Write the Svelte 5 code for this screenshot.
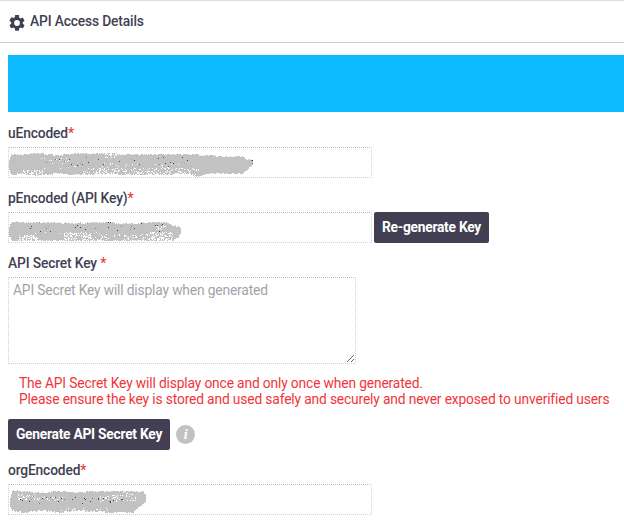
<script>
    // Masks over the stored values: [x, top, bottom] profile points,
    // plus the rows [from, to, y1, y2, density] where the brush is thin
    const masks = {
        user: {
            profile: [[0, 11, 22], [2, 6, 27], [12, 6, 26], [30, 5, 28], [48, 7, 26], [70, 5, 27], [98, 5, 26], [120, 6, 27], [148, 6, 27], [180, 6, 26], [187, 6, 29], [192, 7, 29], [196, 7, 26], [215, 8, 26], [233, 8, 26], [239, 11, 21], [244, 12, 17]],
            holes: [[14, 34, 22, 27, 0.4], [72, 190, 20, 27, 0.2], [96, 108, 5, 10, 0.3], [16, 60, 8, 14, 0.06], [30, 190, 15, 21, 0.03]],
            specks: [28, 192, 9, 19, 46],
        },
        key: {
            profile: [[0, 13, 24], [3, 8, 28], [15, 9, 28], [42, 9, 28], [60, 10, 28], [90, 9, 28], [120, 10, 28], [142, 9, 28], [156, 9, 28], [164, 12, 28], [169, 13, 25], [172, 16, 19]],
            holes: [[10, 29, 22, 29, 0.48], [55, 83, 20, 28, 0.35], [84, 140, 21, 28, 0.13], [140, 164, 19, 28, 0.38], [24, 90, 19, 21, 0.1], [147, 157, 11, 18, 0.25]],
            specks: [18, 158, 9, 19, 46],
        },
        org: {
            profile: [[1, 12, 22], [3, 5, 26], [15, 6, 28], [32, 7, 26], [50, 6, 28], [66, 7, 26], [86, 6, 27], [104, 6, 28], [124, 6, 28], [130, 6, 22], [134, 6, 19], [137, 11, 16]],
            holes: [[9, 26, 9, 15, 0.25], [27, 60, 12, 16, 0.18], [90, 127, 10, 17, 0.22], [35, 105, 23, 28, 0.08], [110, 126, 6, 10, 0.2]],
            specks: [9, 128, 11, 19, 50],
        },
    };

    const speckColors = ["#4a4770", "#3b8fe8", "#e0975f", "#55333a", "#8ec8f5", "#29375f", "#efb98c"];

    function brush({ profile, holes, specks }, seed) {
        let s = seed;
        const rand = () => {
            s = (s * 16807) % 2147483647;
            return s / 2147483647;
        };
        let path = "";
        for (let i = 0; i < profile.length - 1; i++) {
            const [x1, t1, b1] = profile[i];
            const [x2, t2, b2] = profile[i + 1];
            for (let x = x1; x < x2; x++) {
                const k = (x - x1) / (x2 - x1);
                const top = Math.round(t1 + (t2 - t1) * k);
                const bottom = Math.round(b1 + (b2 - b1) * k);
                for (let y = top; y < bottom; y++) {
                    const hole = holes.find((h) => x >= h[0] && x < h[1] && y >= h[2] && y < h[3]);
                    let chance = hole ? hole[4] : 0;
                    if (y === top || y === bottom - 1) chance = Math.max(chance, 0.42);
                    if (rand() >= chance) path += `M${x} ${y}h1v1h-1z`;
                }
            }
        }
        const dots = [];
        for (let i = 0; i < specks[4]; i++) {
            dots.push({
                x: Math.floor(specks[0] + rand() * (specks[1] - specks[0])),
                y: Math.floor(specks[2] + rand() * (specks[3] - specks[2])),
                fill: speckColors[i % speckColors.length],
            });
        }
        return { path, dots };
    }

    const user = brush(masks.user, 271828);
    const key = brush(masks.key, 913377);
    const org = brush(masks.org, 557021);
    user.dots.push({ x: 243, y: 12, fill: "#29375f" }, { x: 242, y: 12, fill: "#3b8fe8" }, { x: 243, y: 15, fill: "#3b8fe8" });
</script>

{#snippet field(mask)}
    <div class="input">
        <svg width="361" height="29" viewBox="0 0 361 29" shape-rendering="crispEdges">
            <path d={mask.path} fill="#c2c2c2" />
            {#each mask.dots as dot}
                <rect x={dot.x} y={dot.y} width="1" height="1" fill={dot.fill} />
            {/each}
        </svg>
    </div>
{/snippet}

<div class="panel">
    <header>
        <svg class="gear" viewBox="2 2 20 20">
            <path
                fill="#423f52"
                d="M19.14 12.94c.04-.3.06-.61.06-.94 0-.32-.02-.64-.07-.94l2.03-1.58a.49.49 0 0 0 .12-.61l-1.92-3.32a.49.49 0 0 0-.59-.22l-2.39.96a7 7 0 0 0-1.62-.94l-.36-2.54A.48.48 0 0 0 13.92 2h-3.84a.48.48 0 0 0-.48.41l-.36 2.54c-.59.24-1.13.57-1.62.94l-2.39-.96a.49.49 0 0 0-.59.22L2.72 8.87a.48.48 0 0 0 .12.61l2.03 1.58c-.05.3-.07.62-.07.94s.02.64.07.94l-2.03 1.58a.49.49 0 0 0-.12.61l1.92 3.32c.12.22.37.29.59.22l2.39-.96c.5.38 1.03.7 1.62.94l.36 2.54c.05.24.24.41.48.41h3.84c.24 0 .44-.17.47-.41l.36-2.54c.59-.24 1.13-.56 1.62-.94l2.39.96c.22.08.47 0 .59-.22l1.92-3.32a.48.48 0 0 0-.12-.61zM12 15.6A3.6 3.6 0 1 1 12 8.4a3.6 3.6 0 0 1 0 7.2z"
            />
        </svg>
        <h1>API Access Details</h1>
    </header>

    <div class="banner"></div>

    <div class="group">
        <span class="label">uEncoded<b>*</b></span>
        {@render field(user)}
    </div>

    <div class="group">
        <span class="label">pEncoded (API Key)<b>*</b></span>
        <div class="row">
            {@render field(key)}
            <button type="button" class="regenerate">Re-generate Key</button>
        </div>
    </div>

    <div class="group">
        <label class="label" for="secret">API Secret Key <b>*</b></label>
        <textarea id="secret" placeholder="API Secret Key will display when generated"></textarea>
    </div>

    <p class="warning">
        The API Secret Key will display once and only once when generated.<br />
        Please ensure the key is stored and used safely and securely and never exposed to unverified users
    </p>

    <div class="row actions">
        <button type="button" class="generate">Generate API Secret Key</button>
        <span class="info">i</span>
    </div>

    <div class="group">
        <span class="label">orgEncoded<b>*</b></span>
        {@render field(org)}
    </div>
</div>

<style>
    :global(body) {
        background: #fff;
        overflow: hidden;
    }

    .panel {
        box-sizing: border-box;
        height: 520px;
        border-top: 1px solid #dedede;
        font-family: Roboto, sans-serif;
        font-size: 13.8px;
        letter-spacing: -0.15px;
        color: #423f52;
    }

    header {
        box-sizing: border-box;
        display: flex;
        align-items: center;
        height: 42px;
        padding-left: 9px;
        border-bottom: 1px solid #cdcdcd;
    }

    .gear {
        width: 16px;
        height: 16px;
        margin: 2px 5px 0 0;
    }

    h1 {
        margin: 0 0 1px;
        font-size: 13.8px;
        font-weight: 500;
    }

    .banner {
        height: 57px;
        margin: 12px 0 11px 8px;
        background: #0dbaff;
    }

    .group {
        margin: 10px 0 0 8px;
    }

    .label {
        display: block;
        height: 24px;
        line-height: 21px;
        font-weight: 500;
    }

    .label b {
        font-weight: 500;
        color: #f23a3f;
    }

    .input,
    textarea {
        box-sizing: border-box;
        border: 1px dotted #cfcfd6;
        border-top-color: #b9b9c0;
    }

    .input {
        width: 364px;
        height: 31px;
    }

    .input svg {
        display: block;
        overflow: visible;
    }

    .row {
        display: flex;
        align-items: center;
    }

    button {
        height: 31px;
        padding: 0;
        border: 0;
        border-radius: 2px;
        background: #423f52;
        color: #fff;
        font: 700 13.8px Roboto, sans-serif;
        letter-spacing: -0.25px;
    }

    .regenerate {
        width: 115px;
        margin-left: 2px;
        padding-bottom: 2px;
    }

    textarea {
        display: block;
        width: 348px;
        height: 87px;
        padding: 4px;
        outline: none;
        background: #fff;
        font: 13.8px/16px Roboto, sans-serif;
        letter-spacing: -0.16px;
    }

    textarea::placeholder {
        color: #a3a3aa;
    }

    .warning {
        margin: 11px 0 0 19px;
        line-height: 16px;
        white-space: nowrap;
        color: #f0353a;
    }

    .actions {
        margin: 12px 0 0 8px;
    }

    .generate {
        width: 162px;
        padding-bottom: 2px;
    }

    .info {
        width: 19px;
        height: 19px;
        margin-left: 6px;
        border-radius: 50%;
        background: #c2c2c2;
        color: #fff;
        font: italic 700 14px/19px "Liberation Serif", serif;
        text-align: center;
    }
</style>
